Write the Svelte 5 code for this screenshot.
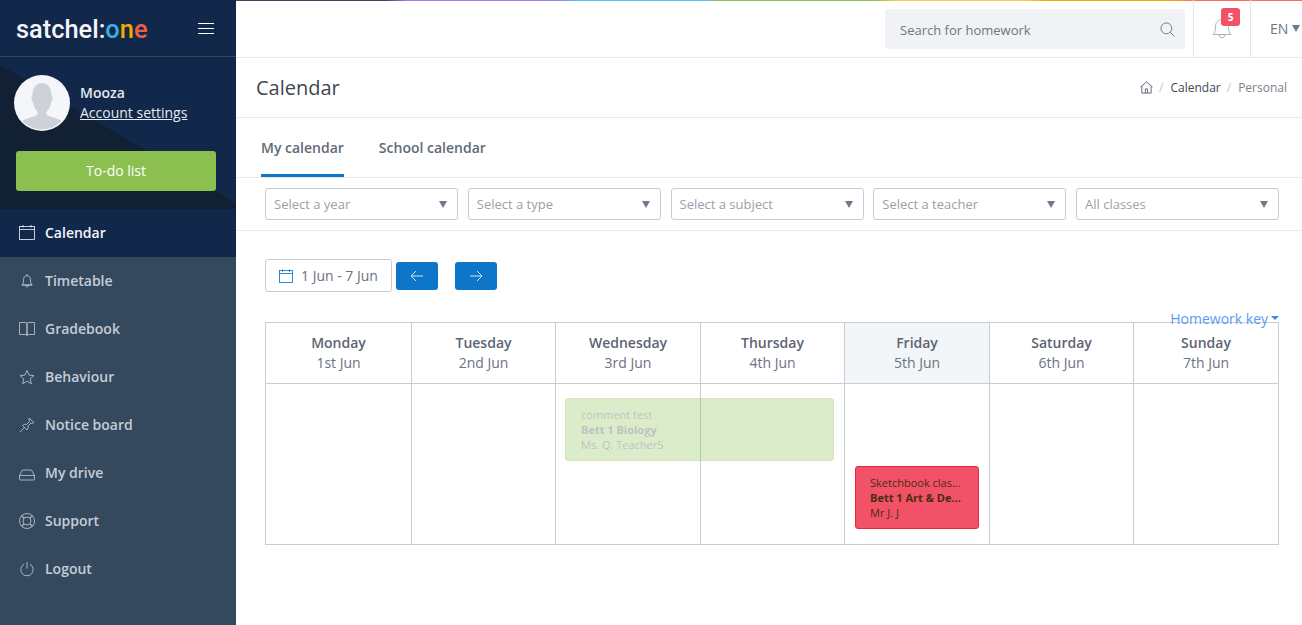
<script>
	const nav = [
		{ label: 'Calendar', icon: 'calendar', active: true },
		{ label: 'Timetable', icon: 'bell' },
		{ label: 'Gradebook', icon: 'book' },
		{ label: 'Behaviour', icon: 'star' },
		{ label: 'Notice board', icon: 'pin' },
		{ label: 'My drive', icon: 'drive' },
		{ label: 'Support', icon: 'support' },
		{ label: 'Logout', icon: 'power' }
	];

	const filters = ['Select a year', 'Select a type', 'Select a subject', 'Select a teacher', 'All classes'];

	const days = [
		{ name: 'Monday', date: '1st Jun' },
		{ name: 'Tuesday', date: '2nd Jun' },
		{ name: 'Wednesday', date: '3rd Jun' },
		{ name: 'Thursday', date: '4th Jun' },
		{ name: 'Friday', date: '5th Jun', today: true },
		{ name: 'Saturday', date: '6th Jun' },
		{ name: 'Sunday', date: '7th Jun' }
	];
</script>

{#snippet navIcon(name)}
	<svg class="nav-icon" viewBox="0 0 16 16" fill="none" stroke="currentColor" stroke-width="0.8">
		{#if name === 'calendar'}
			<rect x="0.5" y="1.5" width="15" height="13" />
			<path d="M0.5 4.5h15M4 0v2.5M12 0v2.5" />
		{:else if name === 'bell'}
			<path d="M3 12c1.500-1 1.500-3 1.500-5.500 0-2.200 1.500-3.800 3.500-3.800s3.500 1.600 3.500 3.800c0 2.500 0 4.500 1.500 5.500z" />
			<path d="M2.500 12h11M8 1v1.700M6.500 12c0 2.500 3 2.500 3 0" />
		{:else if name === 'book'}
			<path d="M0.500 1.500h6c1 0 1.500 0.500 1.500 1v12c0-0.600-0.500-1-1.500-1h-6zM15.500 1.500h-6c-1 0-1.500 0.500-1.500 1v12c0-0.600 0.500-1 1.500-1h6z" />
		{:else if name === 'star'}
			<path d="M8 1.500l2 4.600 5 0.500-3.800 3.300 1.200 4.900L8 12.200l-4.400 2.600 1.200-4.900L1 6.600l5-0.500z" />
		{:else if name === 'pin'}
			<path d="M10 1l5 4.500c-1 1-2 1-3 .5l-3 3c.5 1.500 0 3-1 4L3.500 8.500c1-1 2.500-1.500 4-1l3-3c-.5-1-.5-2.500-.5-3.500z" />
			<path d="M5.500 10.500L1 15" />
		{:else if name === 'drive'}
			<path d="M3.500 5h9l3 5.500v3.500a1 1 0 0 1-1 1h-13a1 1 0 0 1-1-1v-3.500z" />
			<path d="M0.500 10.500h15" />
		{:else if name === 'support'}
			<circle cx="8" cy="8" r="7.500" />
			<circle cx="8" cy="8" r="4" />
			<path d="M5 5L3 2.300M5 5L2.300 3M11 5l2-2.700M11 5l2.700-2M5 11l-2 2.700M5 11l-2.700 2M11 11l2 2.700M11 11l2.700 2" />
		{:else}
			<path d="M5 3.200a6.200 6.200 0 1 0 6 0M8 1v6.500" />
		{/if}
	</svg>
{/snippet}

<div class="app">
	<aside class="sidebar">
		<div class="brand">
			<span class="logo">satchel:<span class="o1">o</span><span class="o2">n</span><span class="o3">e</span></span>
			<button class="burger" aria-label="Menu"><i></i><i></i><i></i></button>
		</div>
		<div class="profile">
			<svg class="shade" viewBox="0 0 236 152" preserveAspectRatio="none"><polygon points="0,8 236,146 236,152 0,152" /></svg>
			<div class="user">
				<svg class="avatar" viewBox="0 0 56 56">
					<defs><clipPath id="avatar-clip"><circle cx="28" cy="28" r="26.500" /></clipPath></defs>
					<circle cx="28" cy="28" r="28" fill="#f4f6f9" />
					<path clip-path="url(#avatar-clip)" fill="#cdd1d9" d="M7 47C10 44 16 43 21 41C24 40 24 38 23 36C21 34 19 31 19 27C18 27 17.500 25 17.500 23C17.500 22 18 21 18.500 20C18.500 13 22 8 28 8C34 8 37.500 13 37.500 20C38 21 38.500 22 38.500 23C38.500 25 38 27 37 27C37 31 35 34 33 36C32 38 32 40 35 41C40 43 46 44 49 47L52 58L4 58Z" />
				</svg>
				<div class="who">
					<div class="name">Mooza</div>
					<a class="settings" href="#settings">Account settings</a>
				</div>
			</div>
			<button class="todo"><span>To-do list</span></button>
		</div>
		<nav>
			{#each nav as item}
				<a class="nav-item" class:active={item.active} href="#nav">
					{@render navIcon(item.icon)}
					<span>{item.label}</span>
				</a>
			{/each}
		</nav>
	</aside>

	<main class="main">
		<div class="rainbow"></div>
		<header class="topbar">
			<div class="search">
				<span>Search for homework</span>
				<svg viewBox="0 0 16 16" fill="none" stroke="#6b7280" stroke-width="1"><circle cx="6.800" cy="6.800" r="5.800" /><path d="M11 11l4.500 4.500" /></svg>
			</div>
			<div class="bell">
				<svg viewBox="0 0 20 24" fill="none" stroke="#aab2c0" stroke-width="1"><path d="M1 18.500c2-1.500 2.500-4 2.500-8 0-4 2.800-7 6.500-7s6.500 3 6.500 7c0 4 .5 6.500 2.500 8z" /><path d="M7 18.500c0 4.500 6 4.500 6 0M10 1v2.500" /></svg>
				<span class="badge">5</span>
			</div>
			<div class="lang">EN<i class="caret"></i></div>
		</header>

		<div class="titlebar">
			<h1>Calendar</h1>
			<div class="crumbs">
				<svg viewBox="0 0 14 14" fill="none" stroke="#4b5563" stroke-width="0.9"><path d="M0.500 6.500L7 1l6.500 5.500M2 5.500V13h10V5.500M5.800 13V8.500h2.400V13" /></svg>
				<em>/</em><span class="here">Calendar</span><em>/</em><span>Personal</span>
			</div>
		</div>

		<div class="tabs">
			<a class="tab active" href="#my">My calendar</a>
			<a class="tab" href="#school">School calendar</a>
		</div>

		<div class="filters">
			{#each filters as f}
				<div class="select"><span>{f}</span><i class="caret"></i></div>
			{/each}
		</div>

		<section class="content">
			<div class="range">
				<div class="dates">
					<svg viewBox="0 0 14 14" fill="none" stroke="#1f7fcb" stroke-width="0.9"><rect x="0.500" y="1.500" width="13" height="12" /><path d="M0.500 4.500h13M3.500 0.500v2.500M10.500 0.500v2.500" /></svg>
					<span>1 Jun - 7 Jun</span>
				</div>
				<button class="arrow" aria-label="Previous">
					<svg viewBox="0 0 14 12" fill="none" stroke="#cfe4f7" stroke-width="1"><path d="M13 6H1M6 1L1 6l5 5" /></svg>
				</button>
				<button class="arrow next" aria-label="Next">
					<svg viewBox="0 0 14 12" fill="none" stroke="#cfe4f7" stroke-width="1"><path d="M1 6h12M8 1l5 5-5 5" /></svg>
				</button>
			</div>

			<div class="key">Homework key<i class="key-caret"></i></div>

			<div class="calendar">
				{#each days as d}
					<div class="day" class:today={d.today}>
						<b>{d.name}</b>
						<span>{d.date}</span>
					</div>
				{/each}
				{#each days as d, i}
					<div class="cell" style="grid-column: {i + 1}"></div>
				{/each}
				<div class="event green">
					<span>comment test</span>
					<b>Bett 1 Biology</b>
					<span>Ms. Q. Teacher5</span>
				</div>
				<div class="event red">
					<span>Sketchbook clas...</span>
					<b>Bett 1 Art &amp; De...</b>
					<span>Mr J. J</span>
				</div>
			</div>
		</section>
	</main>
</div>

<style>
	:global(body) {
		margin: 0;
		overflow: hidden;
	}

	.app {
		display: flex;
		height: 625px;
		font-family: 'Open Sans', sans-serif;
		color: #6b7280;
		background: #fff;
	}

	.sidebar {
		width: 236px;
		flex: none;
		background: #34495e;
		display: flex;
		flex-direction: column;
	}

	.brand {
		height: 57px;
		box-sizing: border-box;
		display: flex;
		align-items: center;
		justify-content: space-between;
		padding: 0 22px 0 16px;
		background: #12284a;
		border-bottom: 1px solid #34465f;
	}

	.logo {
		font-family: Roboto, sans-serif;
		font-size: 25.400px;
		font-weight: 500;
		color: #f4f6f9;
		margin-top: 1px;
	}

	.o1 {
		color: #3eaee0;
	}
	.o2 {
		color: #f5a800;
	}
	.o3 {
		color: #ec5f46;
	}

	.burger {
		width: 16px;
		padding: 0;
		border: 0;
		background: none;
		display: flex;
		flex-direction: column;
		gap: 4px;
	}

	.burger i {
		height: 1px;
		background: #fff;
		display: block;
	}

	.profile {
		position: relative;
		height: 152px;
		background: #12284a;
		padding: 18px 20px 0 14px;
		box-sizing: border-box;
	}

	.shade {
		position: absolute;
		inset: 0;
		width: 100%;
		height: 100%;
	}

	.shade polygon {
		fill: #112033;
	}

	.user {
		position: relative;
		display: flex;
		align-items: center;
		gap: 10px;
	}

	.avatar {
		width: 56px;
		height: 56px;
		flex: none;
	}

	.name {
		font-size: 14px;
		font-weight: 600;
		color: #e6e9ee;
		line-height: 20px;
	}

	.settings {
		display: block;
		font-size: 14px;
		color: #e6e9ee;
		line-height: 20px;
	}

	.todo {
		position: relative;
		display: block;
		margin: 20px 0 0 2px;
		width: 200px;
		height: 40px;
		padding: 0 0 2px;
		border: 0;
		border-radius: 3px;
		background: #8bc051;
		color: #fff;
		font: 14px 'Open Sans', sans-serif;
	}

	nav {
		display: flex;
		flex-direction: column;
	}

	.nav-item {
		height: 48px;
		display: flex;
		align-items: center;
		padding-left: 19px;
		gap: 10px;
		font-size: 14px;
		font-weight: 600;
		color: #c5ccd6;
		text-decoration: none;
	}

	.nav-item span {
		margin-top: -2px;
	}

	.nav-item.active {
		background: #12284a;
		color: #f4f6f9;
	}

	.nav-icon {
		width: 16px;
		height: 16px;
		flex: none;
	}

	.main {
		position: relative;
		flex: 1;
		min-width: 0;
		display: flex;
		flex-direction: column;
	}

	.rainbow {
		position: absolute;
		top: 0;
		left: 0;
		right: 0;
		height: 1px;
		background: linear-gradient(
			to right,
			#34495e 0 14%,
			#a77bdf 16% 30%,
			#4fc3ee 32% 44%,
			#8bc051 45% 60%,
			#ffcc4d 62% 74%,
			#f5a800 76% 88%,
			#ff6b57 90%
		);
	}

	.topbar {
		height: 58px;
		box-sizing: border-box;
		border-bottom: 1px solid #e6e8ec;
		display: flex;
		justify-content: flex-end;
		align-items: stretch;
	}

	.search {
		width: 300px;
		height: 40px;
		margin: 9px 8px 0 0;
		box-sizing: border-box;
		padding: 0 10px 0 15px;
		border-radius: 3px;
		background: #f0f2f6;
		display: flex;
		align-items: center;
		justify-content: space-between;
		font-size: 13px;
		color: #6f7583;
	}

	.search span {
		margin-top: 2px;
	}

	.search svg {
		width: 15px;
		height: 15px;
	}

	.bell {
		position: relative;
		width: 56px;
		border-left: 1px solid #e3e5ea;
		border-right: 1px solid #e3e5ea;
		display: flex;
		align-items: center;
		justify-content: center;
		box-sizing: content-box;
	}

	.bell svg {
		width: 20px;
		height: 24px;
		margin-top: -1px;
	}

	.badge {
		position: absolute;
		top: 8px;
		left: 27px;
		width: 19px;
		height: 18px;
		border-radius: 3px;
		background: #f25267;
		color: #fff;
		font-size: 10px;
		font-weight: 700;
		text-align: center;
		line-height: 18px;
	}

	.lang {
		width: 51px;
		display: flex;
		align-items: center;
		gap: 4px;
		font-size: 14px;
		color: #6f7583;
		padding-left: 19px;
		box-sizing: border-box;
	}

	.caret {
		width: 0;
		height: 0;
		border-left: 4.500px solid transparent;
		border-right: 4.500px solid transparent;
		border-top: 7px solid #6e7a8f;
	}

	.titlebar {
		height: 60px;
		box-sizing: border-box;
		border-bottom: 1px solid #e6e8ec;
		display: flex;
		align-items: center;
		justify-content: space-between;
		padding: 0 15px 0 20px;
	}

	h1 {
		margin: 0;
		font-size: 20px;
		font-weight: 400;
		color: #3f4652;
	}

	.crumbs {
		display: flex;
		align-items: center;
		font-size: 12px;
		color: #7a808c;
	}

	.crumbs svg {
		width: 13px;
		height: 13px;
	}

	.crumbs em {
		font-style: normal;
		color: #c3c7ce;
		margin: 0 7px 0 6px;
	}

	.crumbs .here {
		color: #3f4652;
	}

	.tabs {
		height: 60px;
		box-sizing: border-box;
		border-bottom: 1px solid #e6e8ec;
		display: flex;
		gap: 35px;
		padding-left: 25px;
	}

	.tab {
		height: 59px;
		box-sizing: border-box;
		padding-top: 20px;
		font-size: 14px;
		font-weight: 600;
		color: #626a78;
		text-decoration: none;
	}

	.tab.active {
		border-bottom: 3px solid #0d76c9;
	}

	.filters {
		height: 53px;
		box-sizing: border-box;
		border-bottom: 1px solid #e6e8ec;
		display: flex;
		gap: 9.750px;
		padding: 10px 23px 0 29px;
	}

	.select {
		width: 193px;
		height: 32px;
		box-sizing: border-box;
		border: 1px solid #c9cbd0;
		border-radius: 3px;
		padding: 0 10px 0 8px;
		display: flex;
		align-items: center;
		justify-content: space-between;
		font-size: 13px;
		color: #9a9fa8;
	}

	.select:last-child {
		flex: 1;
	}

	.content {
		flex: 1;
		padding: 28px 23px 0 29px;
	}

	.range {
		display: flex;
		align-items: center;
		height: 33px;
	}

	.dates {
		width: 127px;
		height: 33px;
		box-sizing: border-box;
		border: 1px solid #c9cbd0;
		border-radius: 3px;
		display: flex;
		align-items: center;
		padding-left: 13px;
		gap: 8px;
		font-size: 14px;
		color: #6b7280;
	}

	.dates svg {
		width: 14px;
		height: 14px;
	}

	.arrow {
		width: 42px;
		height: 28px;
		margin-left: 4px;
		padding: 0;
		border: 0;
		border-radius: 3px;
		background: #0d76c9;
		display: flex;
		align-items: center;
		justify-content: center;
	}

	.arrow.next {
		margin-left: 17px;
	}

	.arrow svg {
		width: 14px;
		height: 12px;
	}

	.key {
		display: flex;
		justify-content: flex-end;
		align-items: center;
		gap: 3px;
		height: 20px;
		margin-top: 16px;
		margin-bottom: -6px;
		position: relative;
		z-index: 1;
		font-size: 14px;
		color: #5b9cf0;
	}

	.key-caret {
		width: 0;
		height: 0;
		border-left: 4px solid transparent;
		border-right: 4px solid transparent;
		border-top: 4px solid #3d8ae8;
	}

	.calendar {
		display: grid;
		grid-template-columns: 146px 144px 145px 144px 145px 144px 145px;
		grid-template-rows: 61px 161px;
		border: 1px solid #c8ccd6;
		border-right: 0;
		border-bottom: 0;
		width: 1014px;
		box-sizing: border-box;
	}

	.day {
		border-right: 1px solid #c8ccd6;
		border-bottom: 1px solid #c8ccd6;
		display: flex;
		flex-direction: column;
		align-items: center;
		padding-top: 10px;
		box-sizing: border-box;
		font-size: 14px;
		line-height: 20px;
	}

	.day b {
		font-weight: 600;
		color: #5d6472;
	}

	.day span {
		color: #6b7280;
	}

	.day.today {
		background: #f3f6f9;
	}

	.cell {
		grid-row: 2;
		border-right: 1px solid #c8ccd6;
		border-bottom: 1px solid #c8ccd6;
	}

	.event {
		grid-row: 2;
		height: 63px;
		box-sizing: border-box;
		border-radius: 3px;
		padding: 8px 14px 0 15px;
		display: flex;
		flex-direction: column;
		font-size: 11px;
		line-height: 15px;
		min-width: 0;
	}

	.event span,
	.event b {
		white-space: nowrap;
	}

	.green {
		grid-column: 3 / 5;
		margin: 14px 11px 0 9px;
		background: #8ac352;
		border: 1px solid #6fa835;
		opacity: 0.3;
		color: #333;
	}

	.red {
		grid-column: 5;
		margin: 82px 11px 0 10px;
		padding-left: 14px;
		background: #f25267;
		border: 1px solid #e8283f;
		color: #4a2d0a;
	}
</style>
